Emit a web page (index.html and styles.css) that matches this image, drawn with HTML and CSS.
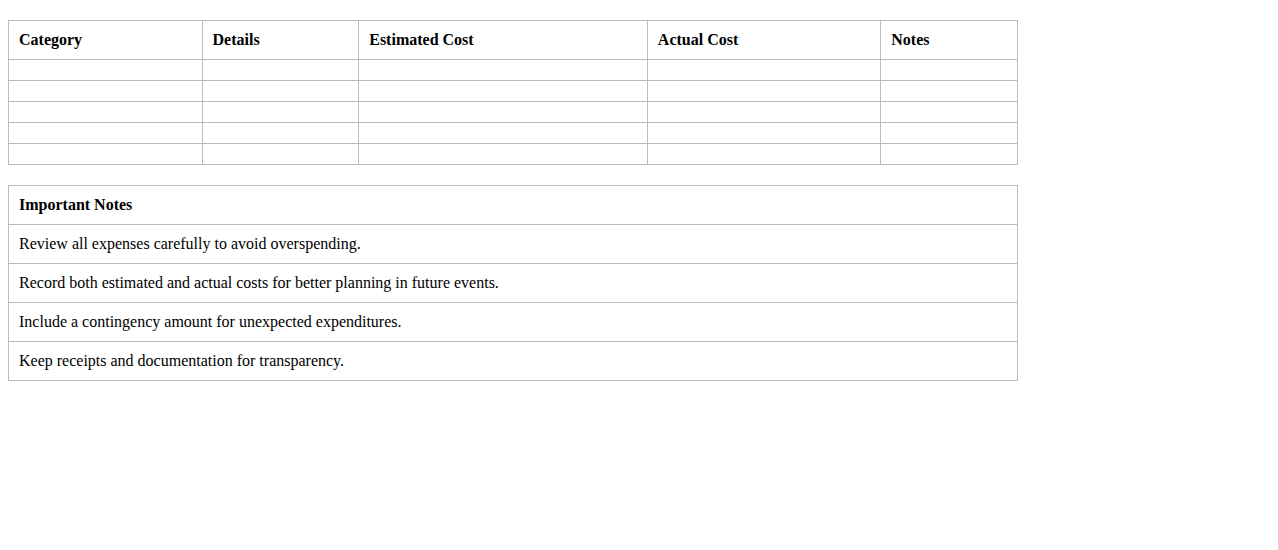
FILE: index.html
```html
<!DOCTYPE html>
<html>
<head>
<meta charset="utf-8">
<link rel="stylesheet" href="styles.css">
</head>
<body>
<table class="grid">
  <thead>
    <tr><th>Category</th><th>Details</th><th>Estimated Cost</th><th>Actual Cost</th><th>Notes</th></tr>
  </thead>
  <tbody>
    <tr><td></td><td></td><td></td><td></td><td></td></tr>
    <tr><td></td><td></td><td></td><td></td><td></td></tr>
    <tr><td></td><td></td><td></td><td></td><td></td></tr>
    <tr><td></td><td></td><td></td><td></td><td></td></tr>
    <tr><td></td><td></td><td></td><td></td><td></td></tr>
  </tbody>
</table>
<table class="grid">
  <thead>
    <tr><th>Important Notes</th></tr>
  </thead>
  <tbody>
    <tr><td>Review all expenses carefully to avoid overspending.</td></tr>
    <tr><td>Record both estimated and actual costs for better planning in future events.</td></tr>
    <tr><td>Include a contingency amount for unexpected expenditures.</td></tr>
    <tr><td>Keep receipts and documentation for transparency.</td></tr>
  </tbody>
</table>
</body>
</html>
```
FILE: styles.css
```css
body {
  margin: 8px;
  font-family: "Liberation Serif", "Times New Roman", serif;
  font-size: 16px;
  color: #000;
  background: #fff;
}
.grid {
  width: 80%;
  border-collapse: collapse;
  margin: 12px 0 20px;
}
.grid th,
.grid td {
  border: 1px solid #bbb;
  padding: 10px;
  text-align: left;
}
.grid th {
  font-weight: bold;
}
```
